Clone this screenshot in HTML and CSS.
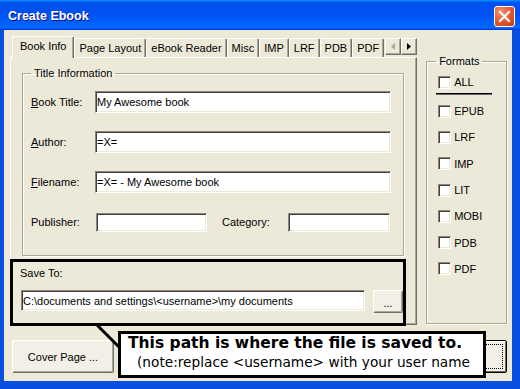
FILE: index.html
```html
<!doctype html>
<html lang="en">
    <head>
        <meta charset="UTF-8" />
        <title>Create Ebook</title>
        <link rel="stylesheet" href="styles.css">
    </head>
    <body>
        <div class="window">
            <div class="titlebar">
                <span class="title">Create Ebook</span>
                <span class="close-btn">
                    <svg width="13" height="13" viewBox="0 0 13 13">
                        <path d="M2 2 L11 11 M11 2 L2 11" stroke="#fff" stroke-width="2.2" stroke-linecap="square" />
                    </svg>
                </span>
            </div>
            <div class="client">
                <div class="main-row">
                    <div class="tabs">
                        <div class="tab-strip">
                            <span class="tab active">Book Info</span>
                            <span class="tab">Page Layout</span>
                            <span class="tab">eBook Reader</span>
                            <span class="tab">Misc</span>
                            <span class="tab">IMP</span>
                            <span class="tab">LRF</span>
                            <span class="tab">PDB</span>
                            <span class="tab">PDF</span>
                            <span class="tab-scroll">
                                <span class="scroll-btn">
                                    <svg width="4" height="7" viewBox="0 0 4 7"><path d="M4 0 L0 3.5 L4 7 Z" fill="#aca899" /></svg>
                                </span>
                                <span class="scroll-btn">
                                    <svg width="4" height="7" viewBox="0 0 4 7"><path d="M0 0 L4 3.5 L0 7 Z" fill="#000" /></svg>
                                </span>
                            </span>
                        </div>
                        <div class="tab-panel">
                            <fieldset class="group title-info">
                                <legend>Title Information</legend>
                                <div class="field-row">
                                    <label class="field-label"><u>B</u>ook Title:</label>
                                    <input class="text-input wide" type="text" value="My Awesome book" />
                                </div>
                                <div class="field-row">
                                    <label class="field-label"><u>A</u>uthor:</label>
                                    <input class="text-input wide" type="text" value="=X=" />
                                </div>
                                <div class="field-row">
                                    <label class="field-label"><u>F</u>ilename:</label>
                                    <input class="text-input wide" type="text" value="=X= - My Awesome book" />
                                </div>
                                <div class="field-row">
                                    <label class="field-label">Publisher:</label>
                                    <input class="text-input small publisher" type="text" />
                                    <label class="field-label category-label">Category:</label>
                                    <input class="text-input small category" type="text" />
                                </div>
                            </fieldset>
                            <div class="save-to">
                                <div class="save-label">Save To:</div>
                                <div class="save-row">
                                    <input class="text-input path" type="text" value="C:\documents and settings\&lt;username&gt;\my documents" />
                                    <button class="btn browse">...</button>
                                </div>
                            </div>
                        </div>
                    </div>
                    <fieldset class="group formats">
                        <legend>Formats</legend>
                        <label class="check check-all"><span class="box"></span>ALL</label>
                        <div class="formats-sep"></div>
                        <label class="check"><span class="box"></span>EPUB</label>
                        <label class="check"><span class="box"></span>LRF</label>
                        <label class="check"><span class="box"></span>IMP</label>
                        <label class="check"><span class="box"></span>LIT</label>
                        <label class="check"><span class="box"></span>MOBI</label>
                        <label class="check"><span class="box"></span>PDB</label>
                        <label class="check"><span class="box"></span>PDF</label>
                    </fieldset>
                </div>
                <div class="button-row">
                    <button class="btn cover">Cover Page ...</button>
                    <button class="btn default"><span class="focus"></span></button>
                </div>
            </div>

            <svg class="pointer" width="36" height="36" viewBox="0 0 36 36">
                <line x1="7" y1="5" x2="30" y2="28" stroke="#000" stroke-width="3" />
            </svg>
            <div class="callout">
                <div class="callout-main">This path is where the file is saved to.</div>
                <div class="callout-note">(note:replace &lt;username&gt; with your user name</div>
            </div>
        </div>
    </body>
</html>
```

FILE: styles.css
```css
html,
body {
    margin: 0;
    padding: 0;
}
body {
    font-family: "Liberation Sans", Arial, sans-serif;
    font-size: 11px;
    color: #000;
}
.window {
    position: relative;
    width: 520px;
    height: 389px;
    background: #0a4fe0;
    display: flex;
    flex-direction: column;
    overflow: hidden;
}
.titlebar {
    height: 30px;
    flex: none;
    display: flex;
    align-items: center;
    justify-content: space-between;
    padding: 0 5px 0 8px;
    background: linear-gradient(180deg, #0997ff, #0053ee 8%, #0050ee 40%, #06f 88%, #06f 93%, #005bff 95%, #003dd7 96%, #003dd7);
}
.title {
    color: #fff;
    font-weight: bold;
    font-size: 12.5px;
    text-shadow: 1px 1px #0f1089;
    margin-top: 1px;
}
.close-btn {
    width: 21px;
    height: 21px;
    box-sizing: border-box;
    border: 1px solid #fff;
    border-radius: 3px;
    background: radial-gradient(circle at 30% 25%, #f08f6e, #e2542c 55%, #c33b12);
    display: flex;
    align-items: center;
    justify-content: center;
    margin-top: 2px;
}
.client {
    flex: 1;
    margin: 0 8px 8px 4px;
    background: #ece9d8;
    padding: 6px 5px 0 6px;
    display: flex;
    flex-direction: column;
}
.main-row {
    display: flex;
    gap: 9px;
}

/* tabs */
.tabs {
    width: 408px;
}
.tab-strip {
    height: 21px;
    display: flex;
    align-items: flex-end;
    padding-left: 2px;
}
.tab {
    height: 19px;
    box-sizing: border-box;
    padding: 0 4px;
    line-height: 18px;
    border-top: 1px solid #fff;
    border-left: 1px solid #fff;
    border-right: 1px solid #716f64;
    box-shadow: inset -1px 0 #aca899;
    border-top-left-radius: 2px;
    border-top-right-radius: 2px;
    white-space: nowrap;
}
.tab.active {
    height: 22px;
    margin-bottom: -1px;
    padding: 0 7px;
    line-height: 19px;
    background: #ece9d8;
    position: relative;
    z-index: 1;
}
.tab-scroll {
    margin-left: auto;
    align-self: flex-start;
    margin-top: 2px;
    display: flex;
}
.scroll-btn {
    width: 16px;
    height: 17px;
    box-sizing: border-box;
    border: 1px solid;
    border-color: #fff #716f64 #716f64 #fff;
    box-shadow: inset -1px -1px #aca899;
    display: flex;
    align-items: center;
    justify-content: center;
}
.tab-panel {
    height: 268px;
    box-sizing: border-box;
    border: 1px solid;
    border-color: #fff #716f64 #716f64 #fff;
    box-shadow: inset -1px -1px #aca899;
}

/* group boxes */
.group {
    border: 1px solid #aca899;
    box-shadow: 1px 1px #fff, inset 1px 1px #fff;
    margin: 0;
    min-width: 0;
}
.group legend {
    padding: 0 3px;
    line-height: 13px;
}
.title-info {
    margin: 9px 12px 0 11px;
    padding: 2px 12px 13px 8px;
}
.field-row {
    height: 40px;
    display: flex;
    align-items: center;
}
.field-label {
    width: 64px;
    flex: none;
}
.text-input {
    font-family: "Liberation Sans", Arial, sans-serif;
    font-size: 11px;
    color: #000;
    background: #fff;
    box-sizing: border-box;
    height: 22px;
    padding: 0 1px;
    margin: 0;
    border: 1px solid;
    border-color: #8a877a #fff #fff #8a877a;
    box-shadow: inset 1px 1px #404040, inset -1px -1px #ece9d8;
    outline: none;
    min-width: 0;
}
.text-input.wide {
    flex: 1;
}
.text-input.small {
    height: 19px;
}
.publisher {
    width: 111px;
    margin-left: 1px;
}
.category-label {
    width: auto;
    margin: 0 18px 0 15px;
}
.category {
    width: 102px;
}

/* save to */
.save-to {
    margin: 3px 0 0 -1px;
    width: 396px;
    height: 67px;
    box-sizing: border-box;
    border: 3px solid #000;
    padding: 5px 0 0 7px;
    position: relative;
}
.save-label {
    line-height: 13px;
}
.save-row {
    display: flex;
    align-items: flex-start;
    margin-top: 10px;
    padding-left: 1px;
}
.text-input.path {
    width: 344px;
    height: 21px;
}
.btn {
    font-family: "Liberation Sans", Arial, sans-serif;
    font-size: 11px;
    color: #000;
    background: #f2f0e6;
    box-sizing: border-box;
    border: 1px solid;
    border-color: #fff #716f64 #716f64 #fff;
    box-shadow: inset -1px -1px #aca899;
    border-radius: 2px;
    padding: 0;
    margin: 0;
}
.browse {
    width: 30px;
    height: 23px;
    margin-left: 8px;
    padding-top: 3px;
}

/* formats */
.formats {
    width: 81px;
    height: 269px;
    box-sizing: border-box;
    margin-top: 19px;
    padding: 4px 0 0 9px;
}
.check {
    display: flex;
    align-items: center;
    height: 26.3px;
    padding-left: 2px;
}
.check-all {
    height: 20px;
}
.box {
    width: 13px;
    height: 13px;
    box-sizing: border-box;
    background: #fff;
    border: 1px solid;
    border-color: #8a877a #fff #fff #8a877a;
    box-shadow: inset 1px 1px #404040, inset -1px -1px #ece9d8;
    margin-right: 3px;
    flex: none;
}
.formats-sep {
    width: 56px;
    height: 1px;
    border-top: 1px solid #000;
    background: #666;
    margin: 1px 0 3px;
}

/* bottom buttons */
.button-row {
    display: flex;
    justify-content: space-between;
    margin-top: 15px;
    padding-left: 2px;
}
.cover {
    width: 102px;
    height: 33px;
}
.default {
    width: 90px;
    height: 33px;
    border-color: #000;
    box-shadow: inset 1px 1px #fff, inset -1px -1px #716f64;
    padding: 3px;
}
.focus {
    display: block;
    height: 100%;
    border: 1px dotted #000;
    box-sizing: border-box;
}

/* annotation overlay */
.pointer {
    position: absolute;
    left: 90px;
    top: 320px;
}
.callout {
    position: absolute;
    left: 118px;
    top: 331px;
    width: 368px;
    height: 47px;
    box-sizing: border-box;
    border: 3px solid #000;
    background: #fff;
    padding: 0 0 0 7px;
    font-family: "DejaVu Sans", Verdana, sans-serif;
}
.callout-main {
    font-weight: bold;
    font-size: 15.5px;
    line-height: 18px;
    white-space: nowrap;
}
.callout-note {
    font-size: 13.7px;
    line-height: 20px;
    padding-left: 9px;
    white-space: nowrap;
}
```
